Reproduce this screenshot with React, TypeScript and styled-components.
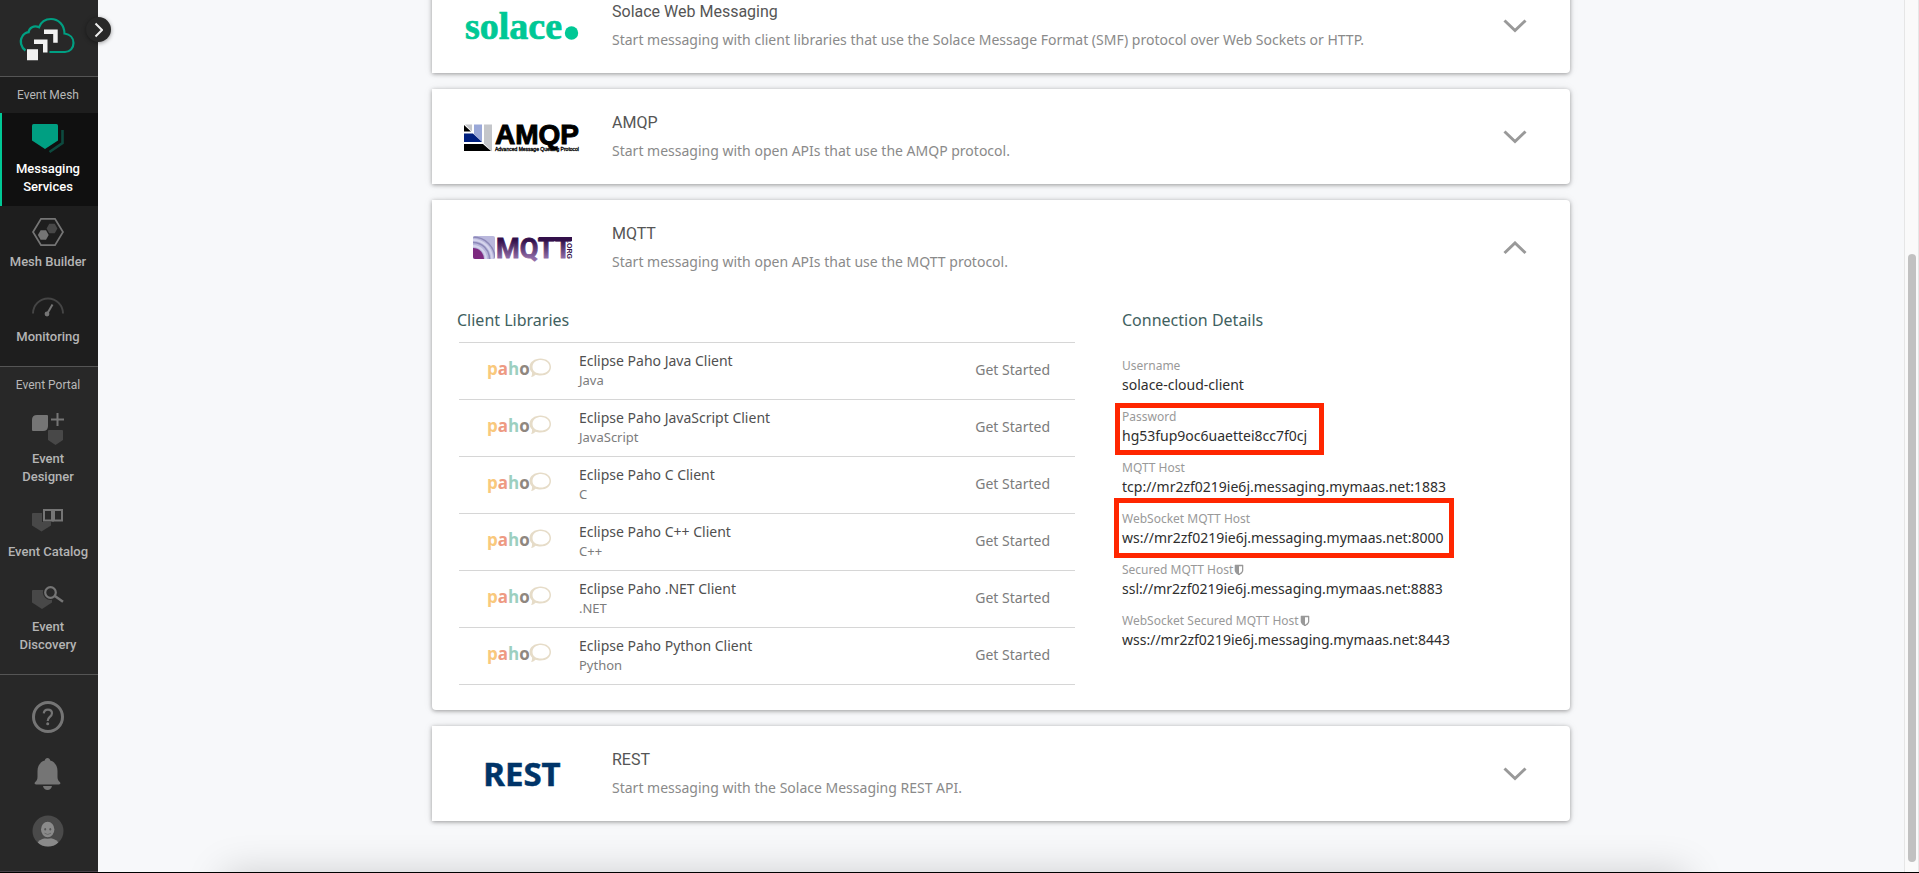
import React, { useState } from "react";
import styled, { createGlobalStyle, css } from "styled-components";

const GlobalStyle = createGlobalStyle`
  *, *::before, *::after { box-sizing: border-box; }
  body { margin: 0; background: #f7f8fa; font-family: "Noto Sans", sans-serif; }
  ul, dl, dd, h2, h3, p { margin: 0; padding: 0; }
  ul { list-style: none; }
`;

/* ---------- shell ---------- */

const Shell = styled.div`
  display: flex;
  height: 100vh;
  overflow: hidden;
  border-bottom: 1px solid #000;
`;

const Sidebar = styled.nav`
  position: relative;
  z-index: 2;
  flex: none;
  display: flex;
  flex-direction: column;
  width: 98px;
  background: #282828;
  border-bottom: 1px solid #4b434b;
  font-family: Roboto, sans-serif;
`;

const Brand = styled.a`
  display: block;
  height: 77px;
  border-bottom: 1px solid #555;
`;

const ExpandButton = styled.button`
  position: absolute;
  top: 17px;
  right: -13px;
  display: flex;
  align-items: center;
  justify-content: center;
  width: 25px;
  height: 25px;
  padding: 0;
  border: 0;
  border-radius: 50%;
  background: #282828;
  box-shadow: 0 1px 4px rgba(0, 0, 0, 0.4);
`;

const NavSection = styled.section<{ $dark?: boolean }>`
  padding-bottom: 10px;
  border-bottom: 1px solid #555;
  background: ${(p) => (p.$dark ? "#1e1e1e" : "#282828")};
`;

const NavHeading = styled.h2`
  height: 36px;
  padding-right: 2px;
  font-size: 12px;
  font-weight: 400;
  line-height: 36px;
  text-align: center;
  color: #b8b8b8;
`;

const NavItem = styled.a<{ $active?: boolean }>`
  display: flex;
  flex-direction: column;
  align-items: center;
  gap: 5px;
  padding: 10px 2px 10px 0;
  font-size: 13px;
  font-weight: 500;
  line-height: 18px;
  text-align: center;
  text-decoration: none;
  color: #b4b4b4;
  ${(p) =>
    p.$active &&
    css`
      color: #fff;
      background: #101010;
      box-shadow: inset 2px 0 0 #00c895;
    `}
`;

const NavLabel = styled.span`
  max-width: 82px;
`;

const Utilities = styled.div`
  display: flex;
  flex-direction: column;
  align-items: center;
  gap: 25px;
  padding: 26px 2px 0 0;
`;

const IconButton = styled.button`
  display: flex;
  align-items: center;
  justify-content: center;
  width: 32px;
  height: 32px;
  padding: 0;
  border: 0;
  background: none;
`;

const Content = styled.main`
  position: relative;
  flex: 1;
  min-width: 0;
  display: flex;
  flex-direction: column;
  align-items: center;
  justify-content: flex-end;
  gap: 16px;
  padding: 0 24px 51px;
  overflow: hidden;
`;

const BottomGlow = styled.div`
  position: absolute;
  left: 7%;
  right: 12%;
  top: 100%;
  height: 80px;
  box-shadow: 0 0 38px rgba(0, 0, 0, 0.17);
`;

const ScrollTrack = styled.div`
  flex: none;
  display: grid;
  grid-template-rows: 254fr 608fr 10fr;
  justify-content: center;
  width: 15px;
  border: solid #e6e6e6;
  border-width: 0 1px;
  background: #fafafa;
`;

const ScrollThumb = styled.div`
  grid-row: 2;
  width: 8px;
  border-radius: 4px;
  background: #c1c1c1;
`;

/* ---------- protocol cards ---------- */

const Card = styled.article<{ $open?: boolean }>`
  position: relative;
  z-index: 1;
  flex: none;
  width: 100%;
  max-width: 1138px;
  border-radius: ${(p) => (p.$open ? "0 4px 4px 4px" : "0 4px 4px 0")};
  background: #fff;
  box-shadow: 0 1px 4px rgba(0, 0, 0, 0.36), 0 0 12px rgba(0, 0, 0, 0.06);
`;

const CardHeader = styled.header`
  display: grid;
  grid-template-columns: 180px 1fr 40px;
  align-items: center;
  height: 95px;
  padding-right: 35px;
`;

const LogoSlot = styled.div`
  display: flex;
  justify-content: center;
`;

const CardCopy = styled.div`
  padding-bottom: 2px;
`;

const CardTitle = styled.h2`
  margin-bottom: 6px;
  font-family: Roboto, sans-serif;
  font-size: 16px;
  font-weight: 400;
  line-height: 24px;
  color: #555;
`;

const CardText = styled.p`
  font-size: 14px;
  line-height: 20px;
  color: #8a8a8a;
`;

const Toggle = styled.button`
  display: flex;
  align-items: center;
  justify-content: center;
  width: 40px;
  height: 40px;
  padding: 0;
  border: 0;
  background: none;
`;

const CardBody = styled.div`
  display: grid;
  grid-template-columns: 618fr 423fr;
  column-gap: 47px;
  padding: 13px 25px 25px;
`;

const SectionTitle = styled.h3`
  font-size: 16px;
  font-weight: 400;
  line-height: 24px;
  color: #3f6160;
`;

const LibraryList = styled.ul`
  margin: 10px 0 0 2px;
  border-top: 1px solid #d6d6d6;
`;

const LibraryRow = styled.li`
  display: grid;
  grid-template-columns: 120px 1fr auto;
  align-items: center;
  padding: 8px 25px 10px 0;
  border-bottom: 1px solid #d6d6d6;
`;

const LibraryName = styled.p`
  font-size: 14px;
  line-height: 20px;
  color: #505050;
`;

const LibraryLanguage = styled.p`
  font-size: 13px;
  line-height: 18px;
  color: #7c7c7c;
`;

const StartLink = styled.a`
  font-size: 14px;
  line-height: 20px;
  color: #7c7c7c;
  text-decoration: none;
`;

const DetailList = styled.dl`
  display: grid;
  gap: 13px;
  margin-top: 25px;
`;

const Detail = styled.div`
  position: relative;
`;

const DetailLabel = styled.dt`
  display: flex;
  align-items: center;
  font-size: 12px;
  line-height: 17px;
  color: #999;
`;

const DetailValue = styled.dd`
  font-size: 14px;
  line-height: 21px;
  color: #2e2e2e;
`;

type Box = { top: number; left: number; width: number; height: number };

const Highlight = styled.span<{ $box: Box }>`
  position: absolute;
  top: ${(p) => p.$box.top}px;
  left: ${(p) => p.$box.left}px;
  width: ${(p) => p.$box.width}px;
  height: ${(p) => p.$box.height}px;
  border: 5px solid #ff2600;
  pointer-events: none;
`;

/* ---------- sidebar icons ---------- */

const G = "#757575";
const D = "#484848";

const Icon = ({ children }: { children: React.ReactNode }) => (
  <svg width="32" height="32" viewBox="0 0 32 32" fill="none" aria-hidden="true">
    {children}
  </svg>
);

const BrandMark = () => (
  <svg width="98" height="76" viewBox="0 0 98 76" fill="none" aria-hidden="true">
    <path
      d="M25.5 50.5C21 47.5 19.5 41 22 37C23.700 33.800 26.500 32.500 28.600 32.200C29 27.800 34 25 39 27.300C41 21.800 46 19 51 19C58.500 19 64.300 25 64.500 33.500C70 34.200 73.500 38 73.500 43C73.500 48 70 52 65 52H49.500"
      stroke="#009f82"
      strokeWidth="2.2"
    />
    <path d="M27 49.200h11v11H27z M34 39.500h13.500V52.500H43V44H34z M44 29.500h13.700V42.700H53.200V34H44z" fill="#f2f2f2" />
  </svg>
);

const MessagingIcon = () => (
  <Icon>
    <path d="M30.500 7V20L17.500 29" stroke="#0d4a3f" strokeWidth="2.600" />
    <path d="M1.500 1h23Q26 1 26 2.500V17.500L13 26L0 17.500V2.500Q0 1 1.500 1z" fill="#009f82" />
  </Icon>
);

const MeshIcon = () => (
  <Icon>
    <path d="M9 2.800H23L31 16L23 29.200H9L1 16z" stroke={G} strokeWidth="1.800" />
    <path d="M17.300 7.800h5.400l2.700 4.700-2.700 4.700h-5.400l-2.700-4.700z" fill={D} />
    <path d="M8.600 14.300H14l2.700 4.700L14 23.700H8.600L5.900 19z" fill={G} />
  </Icon>
);

const MonitoringIcon = () => (
  <Icon>
    <path d="M1 22.500A15 15 0 0 1 31 22.500" stroke="#454545" strokeWidth="2" />
    <path d="M15 23L20.500 13.500" stroke={G} strokeWidth="2" />
    <circle cx="15" cy="23" r="2.400" fill={G} />
  </Icon>
);

const DesignerIcon = () => (
  <Icon>
    <path d="M5 2H15Q16 2 16 3V13Q16 18 11 18H1Q0 18 0 17V7Q0 2 5 2z" fill={G} />
    <path d="M25.500 0V13M19 6.500H32" stroke={G} strokeWidth="2" />
    <path d="M17 17H30Q31 17 31 18V27L23.500 32L16 27V18Q16 17 17 17z" fill={D} />
  </Icon>
);

const CatalogIcon = () => (
  <Icon>
    <path d="M1 7H18Q19 7 19 8V19.500L9.500 25.500L0 19.500V8Q0 7 1 7z" fill={D} />
    <rect x="10" y="2" width="22" height="14" fill="#282828" />
    <path d="M12 4H20V14.500H12zM22 4H30V14.500H22z" stroke={G} strokeWidth="2" />
    <path d="M21 4V15.500" stroke={G} strokeWidth="2" />
  </Icon>
);

const DiscoveryIcon = () => (
  <Icon>
    <path d="M1 9H19Q20 9 20 10V21.500L10 28L0 21.500V10Q0 9 1 9z" fill={D} />
    <circle cx="18.500" cy="11.500" r="7.600" fill="#282828" />
    <path d="M22.500 15L31 20.800" stroke="#282828" strokeWidth="5" />
    <circle cx="18.500" cy="11.500" r="5.300" stroke={G} strokeWidth="2.200" />
    <path d="M22.500 14.800L31 20.800" stroke={G} strokeWidth="2.500" />
  </Icon>
);

const HelpIcon = () => (
  <Icon>
    <circle cx="16" cy="16" r="14.500" stroke={G} strokeWidth="3" />
    <path
      d="M11.800 12.300C12 9.800 13.500 8.600 15.900 8.600C18.300 8.600 20 9.900 20 12.200C20 14 18.900 15 17.600 16.100C16.300 17.200 15.700 18 15.700 20"
      stroke={G}
      strokeWidth="2.200"
    />
    <circle cx="15.700" cy="22.800" r="1.500" fill={G} />
  </Icon>
);

const BellIcon = () => (
  <Icon>
    <path
      d="M15.500 0C17 0 18 .9 18.200 2.600C23 4 25.500 8 25.500 13V18.500C25.500 21 26 22.500 27.500 23.700C29 25 28.500 26.500 27 26.500H4C2.500 26.500 2 25 3.500 23.700C5 22.500 5.500 21 5.500 18.500V13C5.500 8 8 4 12.800 2.600C13 .9 14 0 15.500 0z"
      fill={G}
    />
    <path d="M11 28H20C19.500 30.500 17.700 32 15.500 32S11.500 30.500 11 28z" fill={G} />
  </Icon>
);

const AvatarIcon = () => (
  <Icon>
    <clipPath id="avatar-disc">
      <circle cx="16" cy="16" r="15.500" />
    </clipPath>
    <circle cx="16" cy="16" r="15.500" fill="#4a4a4a" />
    <g clipPath="url(#avatar-disc)">
      <path d="M5.500 27.500C8.500 24 12 23 16 23S23.500 24 26.500 27.500L22 33H10z" fill="#8a8a8a" />
      <ellipse cx="15.700" cy="15" rx="7.500" ry="8.700" fill="#4a4a4a" />
      <ellipse cx="15.700" cy="14.500" rx="6.700" ry="7.700" fill="#8a8a8a" />
    </g>
    <ellipse cx="13.200" cy="14.300" rx=".9" ry="1.300" fill="#555" />
    <ellipse cx="18.300" cy="14.300" rx=".9" ry="1.300" fill="#555" />
    <path d="M12.500 18.200Q15.700 20.800 19 18.200" stroke="#666" strokeWidth=".9" />
  </Icon>
);

/* ---------- brand logos ---------- */

const Logo = ({ label, children }: { label: string; children: React.ReactNode }) => (
  <svg width="120" height="48" viewBox="0 0 120 48" role="img" aria-label={label}>
    {children}
  </svg>
);

const SolaceLogo = () => (
  <Logo label="solace">
    <text
      x="3"
      y="37"
      fontFamily="'Liberation Serif', serif"
      fontWeight="700"
      fontSize="38"
      fill="#00c895"
      stroke="#00c895"
      strokeWidth=".7"
    >
      solace
    </text>
    <circle cx="109.500" cy="31" r="6.700" fill="#00c895" />
  </Logo>
);

const AmqpLogo = () => (
  <Logo label="AMQP">
    <path d="M3 11.500H10V18.500z" fill="#c4c6ca" />
    <path d="M2 12V18.500H9z" fill="#000" />
    <path d="M12 11.500H20V29L12 21z" fill="#9aa8d8" />
    <path d="M2 20.500H11L20 29H2z" fill="#001f7e" />
    <path d="M22 11.500H30V38.500L22 30.500z" fill="#c4c6ca" />
    <path d="M2 31H21L29 38H2z" fill="#000" />
    <text x="33" y="31" fontFamily="'Liberation Sans', sans-serif" fontWeight="700" fontSize="28" fill="#000" stroke="#000" strokeWidth="1">
      AMQP
    </text>
    <text x="33" y="38" fontFamily="'Liberation Sans', sans-serif" fontSize="5" fill="#000" stroke="#000" strokeWidth=".3">
      Advanced Message Queuing Protocol
    </text>
  </Logo>
);

const MqttLogo = () => (
  <Logo label="MQTT.ORG">
    <defs>
      <linearGradient id="mqtt-ink" x1="0" y1="12" x2="0" y2="34" gradientUnits="userSpaceOnUse">
        <stop offset="0.2" stopColor="#33104a" />
        <stop offset="1" stopColor="#8f6ba6" />
      </linearGradient>
      <clipPath id="mqtt-tile">
        <rect x="11" y="12" width="22" height="23" rx="2" />
      </clipPath>
    </defs>
    <g clipPath="url(#mqtt-tile)">
      <rect x="11" y="12" width="22" height="23" fill="#b9b7dc" />
      <g fill="none">
        <circle cx="11" cy="35" r="22" stroke="#8d89b8" strokeWidth="1.500" />
        <circle cx="11" cy="35" r="19" stroke="#d5d4ec" strokeWidth="2" />
        <circle cx="11" cy="35" r="16.500" stroke="#8d89b8" strokeWidth="1.500" />
        <circle cx="11" cy="35" r="13" stroke="#d5d4ec" strokeWidth="2" />
      </g>
      <circle cx="11" cy="35" r="11" fill="#7d2a80" />
    </g>
    <text
      x="34"
      y="33.500"
      fontFamily="Roboto, sans-serif"
      fontWeight="700"
      fontSize="27"
      fill="url(#mqtt-ink)"
      stroke="url(#mqtt-ink)"
      strokeWidth=".8"
    >
      MQTT
    </text>
    <path d="M77 13H110V17H77z" fill="#33104a" />
    <text transform="translate(105 17) rotate(90)" fontFamily="'Liberation Sans', sans-serif" fontWeight="700" fontSize="7" fill="#33104a">
      .ORG
    </text>
  </Logo>
);

const RestLogo = () => (
  <Logo label="REST">
    <text x="60" y="35.500" textAnchor="middle" fontFamily="'Noto Sans', sans-serif" fontWeight="700" fontSize="33" fill="#003468" stroke="#003468" strokeWidth=".5">
      REST
    </text>
  </Logo>
);

const PahoLogo = () => (
  <svg width="64" height="24" viewBox="0 0 64 24" role="img" aria-label="paho">
    <text x="0" y="17" fontFamily="'Open Sans', sans-serif" fontWeight="700" fontSize="17">
      <tspan fill="#f9c97c">p</tspan>
      <tspan fill="#ee9a82">a</tspan>
      <tspan fill="#9ccfc0">h</tspan>
      <tspan fill="#8f877f">o</tspan>
    </text>
    <path
      fillRule="evenodd"
      d="M53.500 .5C59.500 .5 64 4 64 9S59.500 17.500 53.500 17.500C51.500 17.500 50 17.200 48.500 16.700C47.500 17.800 46 18.800 44 19C45 17.500 45.200 16 45 14.500C43.500 13 42.500 11 42.500 9C42.500 4 47.500 .5 53.500 .5zM54 2C49.500 2 45.500 4.500 45.500 9S49.500 15.500 54 15.500S62.500 13 62.500 9S58.500 2 54 2z"
      fill="#e6dcc8"
    />
  </svg>
);

const ShieldIcon = () => (
  <svg width="12" height="12" viewBox="0 0 1792 1792" fill="#999" aria-label="secured" role="img">
    <path d="M1344 960v-640h-448v1137q119-63 213-137 235-184 235-360zm192-768v768q0 86-33.500 170.500t-83 150-118 127.500-126.500 103-121 77.500-89.500 49.500-42.500 20q-12 6-26 6t-26-6q-16-7-42.500-20t-89.500-49.500-121-77.500-126.500-103-118-127.500-83-150-33.500-170.500v-768q0-26 19-45t45-19h1152q26 0 45 19t19 45z" />
  </svg>
);

const Chevron = ({ up }: { up?: boolean }) => (
  <svg width="24" height="14" viewBox="0 0 24 14" fill="none" stroke="#999" strokeWidth="3" aria-hidden="true">
    <path d={up ? "M1.500 12L12 2L22.500 12" : "M1.500 1.500L12 11.500L22.500 1.500"} />
  </svg>
);

/* ---------- data ---------- */

type NavEntry = { label: string; icon: React.ReactNode; active?: boolean };

const meshItems: NavEntry[] = [
  { label: "Messaging Services", icon: <MessagingIcon />, active: true },
  { label: "Mesh Builder", icon: <MeshIcon /> },
  { label: "Monitoring", icon: <MonitoringIcon /> },
];

const portalItems: NavEntry[] = [
  { label: "Event Designer", icon: <DesignerIcon /> },
  { label: "Event Catalog", icon: <CatalogIcon /> },
  { label: "Event Discovery", icon: <DiscoveryIcon /> },
];

const protocols = [
  {
    title: "Solace Web Messaging",
    text: "Start messaging with client libraries that use the Solace Message Format (SMF) protocol over Web Sockets or HTTP.",
    logo: <SolaceLogo />,
  },
  { title: "AMQP", text: "Start messaging with open APIs that use the AMQP protocol.", logo: <AmqpLogo /> },
  { title: "MQTT", text: "Start messaging with open APIs that use the MQTT protocol.", logo: <MqttLogo /> },
  { title: "REST", text: "Start messaging with the Solace Messaging REST API.", logo: <RestLogo /> },
];

const libraries = [
  ["Eclipse Paho Java Client", "Java"],
  ["Eclipse Paho JavaScript Client", "JavaScript"],
  ["Eclipse Paho C Client", "C"],
  ["Eclipse Paho C++ Client", "C++"],
  ["Eclipse Paho .NET Client", ".NET"],
  ["Eclipse Paho Python Client", "Python"],
];

const details: { label: string; value: string; secured?: boolean; box?: Box }[] = [
  { label: "Username", value: "solace-cloud-client" },
  { label: "Password", value: "hg53fup9oc6uaettei8cc7f0cj", box: { top: -5, left: -7, width: 209, height: 52 } },
  { label: "MQTT Host", value: "tcp://mr2zf0219ie6j.messaging.mymaas.net:1883" },
  {
    label: "WebSocket MQTT Host",
    value: "ws://mr2zf0219ie6j.messaging.mymaas.net:8000",
    box: { top: -12, left: -8, width: 340, height: 60 },
  },
  { label: "Secured MQTT Host", value: "ssl://mr2zf0219ie6j.messaging.mymaas.net:8883", secured: true },
  { label: "WebSocket Secured MQTT Host", value: "wss://mr2zf0219ie6j.messaging.mymaas.net:8443", secured: true },
];

const NavGroup = ({ title, items, dark }: { title: string; items: NavEntry[]; dark?: boolean }) => (
  <NavSection $dark={dark}>
    <NavHeading>{title}</NavHeading>
    {items.map((item) => (
      <NavItem key={item.label} href="#" $active={item.active}>
        {item.icon}
        <NavLabel>{item.label}</NavLabel>
      </NavItem>
    ))}
  </NavSection>
);

const ConnectionPanel = () => (
  <CardBody>
    <section>
      <SectionTitle>Client Libraries</SectionTitle>
      <LibraryList>
        {libraries.map(([name, language]) => (
          <LibraryRow key={name}>
            <LogoSlot>
              <PahoLogo />
            </LogoSlot>
            <div>
              <LibraryName>{name}</LibraryName>
              <LibraryLanguage>{language}</LibraryLanguage>
            </div>
            <StartLink href="#">Get Started</StartLink>
          </LibraryRow>
        ))}
      </LibraryList>
    </section>
    <section>
      <SectionTitle>Connection Details</SectionTitle>
      <DetailList>
        {details.map((d) => (
          <Detail key={d.label}>
            <DetailLabel>
              {d.label}
              {d.secured && <ShieldIcon />}
            </DetailLabel>
            <DetailValue>
              {d.value}
              {d.box && <Highlight $box={d.box} />}
            </DetailValue>
          </Detail>
        ))}
      </DetailList>
    </section>
  </CardBody>
);

export default function App() {
  const [open, setOpen] = useState("MQTT");
  return (
    <>
      <GlobalStyle />
      <Shell>
        <Sidebar>
          <Brand href="#" aria-label="Home">
            <BrandMark />
          </Brand>
          <ExpandButton aria-label="Expand menu">
            <svg width="9" height="16" viewBox="0 0 9 16" fill="none" stroke="#eee" strokeWidth="2" aria-hidden="true">
              <path d="M1.500 1.500L8 8L1.500 14.500" />
            </svg>
          </ExpandButton>
          <NavGroup title="Event Mesh" items={meshItems} dark />
          <NavGroup title="Event Portal" items={portalItems} />
          <Utilities>
            <IconButton aria-label="Help">
              <HelpIcon />
            </IconButton>
            <IconButton aria-label="Notifications">
              <BellIcon />
            </IconButton>
            <IconButton aria-label="Account">
              <AvatarIcon />
            </IconButton>
          </Utilities>
        </Sidebar>
        <Content>
          {protocols.map((p) => (
            <Card key={p.title} $open={open === p.title}>
              <CardHeader>
                <LogoSlot>{p.logo}</LogoSlot>
                <CardCopy>
                  <CardTitle>{p.title}</CardTitle>
                  <CardText>{p.text}</CardText>
                </CardCopy>
                <Toggle
                  aria-label={`Toggle ${p.title}`}
                  aria-expanded={open === p.title}
                  onClick={() => setOpen(open === p.title ? "" : p.title)}
                >
                  <Chevron up={open === p.title} />
                </Toggle>
              </CardHeader>
              {open === p.title && <ConnectionPanel />}
            </Card>
          ))}
          <BottomGlow />
        </Content>
        <ScrollTrack aria-hidden="true">
          <ScrollThumb />
        </ScrollTrack>
      </Shell>
    </>
  );
}
